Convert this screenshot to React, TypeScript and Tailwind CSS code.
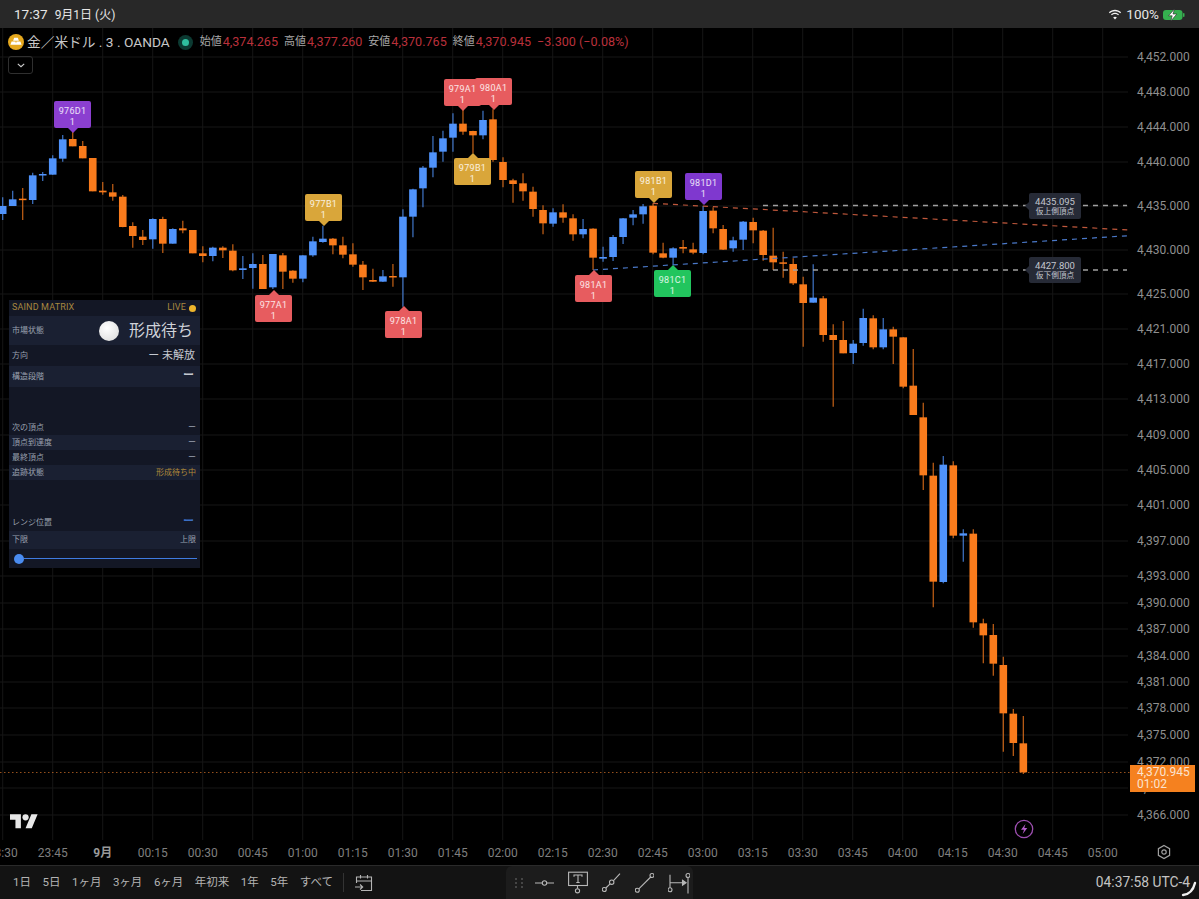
import { Fragment } from 'react';

const ORANGE = '#f97b1c';
const BLUE = '#5093fb';

// [dir, wickTop, bodyTop, bodyBottom, wickBottom] read off the picture at 3x, offset by the crop's top edge
type Raw = [number, number, number, number, number];
const LEFT: Raw[] = [
  [1, 382, 408, 432, 450], [1, 362, 388, 408, 408], [0, 354, 386, 390, 450], [1, 308, 316, 390, 402],
  [1, 306, 312, 316, 333], [1, 256, 265, 314, 314], [1, 195, 208, 266, 275], [0, 185, 207, 229, 229],
  [0, 213, 228, 265, 265], [0, 264, 264, 364, 364], [0, 336, 362, 367, 374], [0, 342, 367, 380, 392],
  [0, 375, 380, 471, 472], [0, 457, 468, 498, 533], [0, 480, 500, 510, 525], [1, 445, 447, 508, 536],
  [0, 440, 447, 521, 549], [1, 475, 477, 521, 521], [0, 452, 475, 481, 490], [0, 480, 480, 550, 550],
  [0, 529, 550, 558, 577], [1, 530, 533, 558, 574], [0, 529, 533, 541, 564], [0, 523, 542, 601, 604],
  [1, 558, 595, 600, 627], [1, 550, 582, 594, 656], [0, 555, 582, 657, 657], [1, 552, 552, 652, 657],
  [0, 549, 556, 605, 657], [0, 601, 602, 626, 638], [1, 556, 556, 626, 637], [1, 500, 514, 556, 560],
  [1, 467, 506, 516, 518], [0, 504, 506, 526, 553], [0, 500, 526, 554, 565], [0, 520, 553, 584, 590],
  [0, 573, 584, 622, 660], [0, 596, 630, 635, 636], [1, 600, 619, 635, 636], [0, 582, 618, 622, 650],
  [1, 418, 440, 622, 710], [1, 356, 358, 440, 502], [1, 288, 293, 355, 412], [1, 198, 247, 293, 322],
  [1, 182, 205, 245, 275], [1, 130, 161, 203, 245], [0, 120, 161, 185, 194], [0, 182, 183, 196, 250],
  [1, 122, 150, 196, 208], [0, 118, 148, 270, 275], [0, 262, 276, 330, 352], [0, 326, 331, 342, 398],
  [0, 310, 340, 364, 392], [0, 350, 365, 417, 440], [0, 406, 420, 460, 493], [1, 415, 427, 461, 470],
  [0, 403, 427, 443, 458], [0, 433, 445, 493, 512], [1, 447, 477, 493, 505], [0, 475, 476, 563, 600],
  [1, 530, 561, 566, 575], [1, 495, 501, 561, 573], [1, 444, 445, 501, 522], [1, 420, 433, 443, 466],
  [1, 402, 409, 433, 461], [0, 400, 407, 548, 553], [0, 518, 550, 563, 565], [1, 532, 535, 563, 585],
  [0, 510, 531, 536, 550], [0, 518, 538, 548, 553], [1, 408, 423, 549, 553], [0, 412, 422, 475, 490],
  [0, 465, 477, 539, 540], [1, 500, 511, 535, 545], [1, 453, 455, 509, 540], [0, 443, 456, 481, 520],
  [0, 480, 482, 555, 572], [0, 473, 557, 577, 600],
];
const MID: Raw[] = [
  [0, 215, 247, 251, 293], [0, 235, 252, 310, 315], [0, 290, 313, 369, 500], [1, 253, 353, 368, 368],
  [0, 348, 355, 465, 485], [0, 433, 465, 480, 680], [0, 423, 480, 520, 520], [1, 480, 491, 519, 552],
  [1, 386, 414, 489, 497], [0, 406, 415, 502, 508], [1, 414, 448, 502, 508], [0, 440, 448, 470, 552],
  [0, 472, 472, 620, 625], [0, 507, 617, 705, 705],
];
const RIGHT: Raw[] = [
  [0, -52, -8, 166, 210], [0, 128, 167, 485, 562], [1, 108, 134, 486, 490], [0, 124, 136, 347, 355],
  [1, 328, 340, 347, 425], [0, 328, 341, 607, 623], [0, 596, 610, 646, 730], [0, 612, 645, 731, 767],
  [0, 710, 735, 880, 995], [0, 867, 881, 969, 1008], [0, 888, 970, 1057, 1062],
];

const toPage = (rows: Raw[], base: number) =>
  rows.map(([d, a, b, c, e]) => [d, base + a / 3, base + b / 3, base + c / 3, base + e / 3]);

const CANDLES = [...toPage(LEFT, 70), ...toPage(MID, 180), ...toPage(RIGHT, 420)];

const PRICES: [string, number][] = [
  ['4,452.000', 57], ['4,448.000', 92], ['4,444.000', 127], ['4,440.000', 162], ['4,435.000', 206],
  ['4,430.000', 250], ['4,425.000', 294], ['4,421.000', 329], ['4,417.000', 364], ['4,413.000', 399],
  ['4,409.000', 435], ['4,405.000', 470], ['4,401.000', 505], ['4,397.000', 541], ['4,393.000', 576],
  ['4,390.000', 603], ['4,387.000', 629], ['4,384.000', 656], ['4,381.000', 682], ['4,378.000', 708],
  ['4,375.000', 735], ['4,372.000', 762], ['4,369.000', 788], ['4,366.000', 815],
];

const TIMES = [
  '23:30', '23:45', '9月', '00:15', '00:30', '00:45', '01:00', '01:15', '01:30', '01:45', '02:00', '02:15',
  '02:30', '02:45', '03:00', '03:15', '03:30', '03:45', '04:00', '04:15', '04:30', '04:45', '05:00',
];

const RANGES = ['1日', '5日', '1ヶ月', '3ヶ月', '6ヶ月', '年初来', '1年', '5年', 'すべて'];

const OHLC = [
  ['始値', '4,374.265'],
  ['高値', '4,377.260'],
  ['安値', '4,370.765'],
  ['終値', '4,370.945'],
];

const MARKERS = [
  { id: '976D1', pos: 'left-[54px] top-[73px]', bg: 'bg-[#8b3fd0]', tip: 'top-[27px] border-t-[5px] border-t-[#8b3fd0]' },
  { id: '977B1', pos: 'left-[305px] top-[166px]', bg: 'bg-[#d9a63a]', tip: 'top-[27px] border-t-[5px] border-t-[#d9a63a]' },
  { id: '977A1', pos: 'left-[255px] top-[267px]', bg: 'bg-[#e75c5f]', tip: '-top-[5px] border-b-[5px] border-b-[#e75c5f]' },
  { id: '978A1', pos: 'left-[385px] top-[283px]', bg: 'bg-[#e75c5f]', tip: '-top-[5px] border-b-[5px] border-b-[#e75c5f]' },
  { id: '979A1', pos: 'left-[444px] top-[51px]', bg: 'bg-[#e75c5f]', tip: 'top-[27px] border-t-[5px] border-t-[#e75c5f]' },
  { id: '980A1', pos: 'left-[475px] top-[50px]', bg: 'bg-[#e75c5f]', tip: 'top-[27px] border-t-[5px] border-t-[#e75c5f]' },
  { id: '979B1', pos: 'left-[454px] top-[130px]', bg: 'bg-[#d9a63a]', tip: '-top-[5px] border-b-[5px] border-b-[#d9a63a]' },
  { id: '981B1', pos: 'left-[635px] top-[143px]', bg: 'bg-[#d9a63a]', tip: 'top-[27px] border-t-[5px] border-t-[#d9a63a]' },
  { id: '981D1', pos: 'left-[685px] top-[145px]', bg: 'bg-[#7f38cf]', tip: 'top-[27px] border-t-[5px] border-t-[#7f38cf]' },
  { id: '981A1', pos: 'left-[575px] top-[247px]', bg: 'bg-[#e75c5f]', tip: '-top-[5px] border-b-[5px] border-b-[#e75c5f]' },
  { id: '981C1', pos: 'left-[654px] top-[242px]', bg: 'bg-[#22c55e]', tip: '-top-[5px] border-b-[5px] border-b-[#22c55e]' },
];

function Chart() {
  return (
    <svg className="absolute inset-0 w-[1199px] h-[812px]" viewBox="0 28 1199 812">
      {/* grid */}
      {PRICES.map(([, y]) => (
        <line key={y} x1="0" x2="1128" y1={y} y2={y} stroke="#161616" />
      ))}
      {TIMES.map((_, i) => (
        <line key={i} x1={2.7 + i * 50} x2={2.7 + i * 50} y1="28" y2="840" stroke="#161616" />
      ))}

      {/* candles */}
      {CANDLES.map(([d, wt, bt, bb, wb], i) => {
        const x = 2.7 + i * 10.006;
        const color = d ? BLUE : ORANGE;
        return (
          <Fragment key={i}>
            <line x1={x} x2={x} y1={wt} y2={wb} stroke={color} strokeOpacity="0.8" strokeWidth="1.2" />
            <rect x={x - 3.8} y={bt} width="7.6" height={Math.max(bb - bt, 1.5)} fill={color} />
          </Fragment>
        );
      })}

      {/* triangle + apex lines */}
      <line x1="653" y1="203.3" x2="1128.5" y2="230" stroke="#c0583c" strokeWidth="1.2" strokeDasharray="5 5" />
      <line x1="593" y1="270" x2="1128.5" y2="235.7" stroke="#4a78c8" strokeWidth="1.2" strokeDasharray="5 5" />
      <line x1="763" y1="205.5" x2="1127" y2="205.5" stroke="#a0a0a0" strokeWidth="1.3" strokeDasharray="5 5" />
      <line x1="763" y1="270" x2="1127" y2="270" stroke="#a0a0a0" strokeWidth="1.3" strokeDasharray="5 5" />
      <line x1="0" y1="772.5" x2="1130" y2="772.5" stroke="#d4722a" strokeOpacity="0.7" strokeWidth="1" strokeDasharray="1.5 2.5" />

      {/* price scale */}
      {PRICES.map(([label, y]) => (
        <text key={label} x="1137" y={y + 4.2} fill="#8f8f8f" fontSize="12">
          {label}
        </text>
      ))}
    </svg>
  );
}

function Marker({ id, pos, bg, tip }: (typeof MARKERS)[number]) {
  return (
    <div className={`absolute ${pos} w-[37px] h-[27px] rounded-[2px] ${bg} text-white/85 text-[9px] leading-[10.5px] tracking-[0.3px] text-center pt-[5px] whitespace-nowrap`}>
      <span className={`absolute left-[13.5px] w-0 h-0 border-x-[5px] border-x-transparent ${tip}`} />
      {id}
      <br />1
    </div>
  );
}

function ApexTag({ price, label, pos }: { price: string; label: string; pos: string }) {
  return (
    <div className={`absolute ${pos} w-[52px] h-[26px] rounded-[2px] bg-[#262a36] flex flex-col items-center justify-center text-[#c3c6ce]`}>
      <span className="absolute -left-[4px] top-[8.5px] w-0 h-0 border-y-[4.5px] border-y-transparent border-r-[4px] border-r-[#262a36]" />
      <span className="text-[9.5px] leading-[11px]">{price}</span>
      <span className="text-[7.7px] leading-[10px]">{label}</span>
    </div>
  );
}

function MatrixRow({ label, value, light, tone = 'text-[#9aa1af]' }: { label: string; value: string; light?: boolean; tone?: string }) {
  return (
    <div className={`h-[15px] pl-[3px] pr-[4px] flex items-center justify-between text-[8px] text-[#9aa1af] ${light ? 'bg-[#1a2032]' : ''}`}>
      <span>{label}</span>
      <span className={tone}>{value}</span>
    </div>
  );
}

function MatrixPanel() {
  return (
    <div className="absolute left-[9px] top-[272px] w-[191px] h-[268px] bg-[#131725] flex flex-col">
      <div className="h-[16px] pl-[3px] pr-[4px] flex items-center justify-between text-[9px] tracking-[0.15px] text-[#a8873f]">
        <span>SAIND MATRIX</span>
        <span className="flex items-center gap-[3px]">
          LIVE
          <span className="w-[7px] h-[7px] rounded-full bg-[#eeb52c]" />
        </span>
      </div>
      <div className="h-[29px] pl-[3px] pr-[7px] flex items-center justify-between bg-[#1a2032] text-[8px] text-[#9aa1af]">
        <span>市場状態</span>
        <span className="flex items-center gap-[10px] text-[16px] text-[#cfd2d8]">
          <span className="w-[20px] h-[20px] rounded-full bg-[radial-gradient(circle_at_40%_35%,#ffffff,#d8d8d8)]" />
          形成待ち
        </span>
      </div>
      <div className="h-[21px] pl-[3px] pr-[5px] pt-[1px] flex items-center justify-between text-[8px] text-[#9aa1af]">
        <span>方向</span>
        <span className="text-[11px] pt-[1px] text-[#c4c8d0]">ー 未解放</span>
      </div>
      <div className="h-[21px] pl-[3px] pr-[6px] flex items-center justify-between bg-[#1a2032] text-[8px] text-[#9aa1af]">
        <span>構造段階</span>
        <span className="text-[11px] font-bold text-[#c4c8d0]">ー</span>
      </div>
      <div className="h-[33px]" />
      <MatrixRow label="次の頂点" value="ー" />
      <MatrixRow label="頂点到達度" value="ー" light />
      <MatrixRow label="最終頂点" value="ー" />
      <MatrixRow label="追跡状態" value="形成待ち中" light tone="text-[#b08a3a]" />
      <div className="h-[34px]" />
      <div className="h-[17px] pl-[3px] pr-[6px] flex items-center justify-between text-[8px] text-[#9aa1af]">
        <span>レンジ位置</span>
        <span className="text-[11px] font-bold text-[#3b6fc4]">ー</span>
      </div>
      <div className="h-[18px] pl-[3px] pr-[4px] flex items-center justify-between bg-[#1a2032] text-[8px] text-[#9aa1af]">
        <span>下限</span>
        <span>上限</span>
      </div>
      <div className="flex-1 pl-[5px] pr-[3px] flex items-center">
        <span className="w-[10px] h-[10px] shrink-0 rounded-full bg-[#4a8cf0]" />
        <span className="flex-1 h-[1.5px] bg-[#3f7be0]" />
      </div>
    </div>
  );
}

function GoldIcon() {
  return (
    <svg viewBox="0 0 16 16" className="w-[16px] h-[16px] shrink-0">
      <circle cx="8" cy="8" r="8" fill="#e5a81e" />
      <path d="M6.200 3.800h3.600l1.100 3H5.100z M3.600 7.600h3.900l.8 3.200H2.400z M8.500 7.600h3.900l1.200 3.200H7.700z" fill="#fff" />
    </svg>
  );
}

function ToolIcons() {
  return (
    <div className="flex items-center gap-[14px] text-[#b8b8b8]">
      <svg viewBox="0 0 19 26" className="w-[19px] h-[26px]" fill="none" stroke="currentColor" strokeWidth="1.1">
        <path d="M0 13h7.300M11.700 13H19" />
        <circle cx="9.500" cy="13" r="2.200" />
      </svg>
      <svg viewBox="0 0 20 26" className="w-[20px] h-[26px]" fill="none" stroke="currentColor" strokeWidth="1.1">
        <rect x="0.600" y="2.200" width="18.800" height="13.300" />
        <path d="M6 6.700V5h8v1.700M10 5v7.500M8.300 12.500h3.400M9.500 15.500v3" />
        <circle cx="9.500" cy="20.800" r="2.100" />
      </svg>
      <svg viewBox="0 0 19 26" className="w-[19px] h-[26px]" fill="none" stroke="currentColor" strokeWidth="1.1">
        <circle cx="2.300" cy="19.500" r="2" />
        <path d="M3.800 18l4.300-4.200M11.500 10.600l6.500-7" />
        <circle cx="9.700" cy="12.200" r="2.200" />
      </svg>
      <svg viewBox="0 0 19 26" className="w-[19px] h-[26px]" fill="none" stroke="currentColor" strokeWidth="1.1">
        <circle cx="2.300" cy="20.200" r="2" />
        <path d="M3.800 18.800L15.700 7" />
        <circle cx="17" cy="5.500" r="2" />
      </svg>
      <svg viewBox="0 0 22 26" className="w-[22px] h-[26px]" fill="none" stroke="currentColor" strokeWidth="1.1">
        <path d="M2 4.800v12.900M2 12.800h13M20 7.600v16" />
        <path d="M14.500 10.300l3.600 2.500-3.600 2.500z" fill="currentColor" />
        <circle cx="2" cy="19.800" r="2" />
        <circle cx="20" cy="5.500" r="2" />
      </svg>
    </div>
  );
}

export default function App() {
  return (
    <div className="w-[1199px] h-[899px] flex flex-col bg-black overflow-hidden font-[Roboto,'Noto_Sans_CJK_JP',sans-serif]">
      {/* iPad status bar */}
      <div className="h-[28px] shrink-0 bg-[#282828] pl-[14px] pr-[14px] pt-[1px] flex items-center text-[#e6e6e6] text-[13.5px]">
        <span>17:37</span>
        <span className="ml-[7px] text-[12px]">9月1日 (火)</span>
        <div className="ml-auto flex items-center gap-[4px]">
          <svg viewBox="0 0 16 12" className="w-[14px] h-[11px]" fill="#f0f0f0">
            <path d="M8 2.200c2.300 0 4.400.9 6 2.400l1-1.100C13.100 1.600 10.700.6 8 .6S2.900 1.600 1 3.500l1 1.100c1.600-1.500 3.700-2.400 6-2.400z" />
            <path d="M8 5.500c1.400 0 2.600.5 3.600 1.400l1-1.100C11.300 4.600 9.700 3.900 8 3.900s-3.300.7-4.600 1.900l1 1.100c1-.9 2.200-1.400 3.600-1.400z" />
            <path d="M8 8.700c-.8 0-1.500.3-2.100.8L8 11.700l2.100-2.200c-.6-.5-1.300-.8-2.100-.8z" />
          </svg>
          <span>100%</span>
          <svg viewBox="0 0 22 12" className="w-[22px] h-[12px]">
            <rect x="0" y="1" width="19.500" height="10" rx="3" fill="#35b04f" />
            <rect x="20" y="4" width="1.500" height="4" rx="0.700" fill="#35b04f" />
            <path d="M11.500 0L5.500 6.800h3.700L7.800 12l6-7H10z" fill="#fff" stroke="#282828" strokeWidth="0.600" />
          </svg>
        </div>
      </div>

      {/* chart */}
      <div className="relative flex-1 min-h-0">
        <Chart />

        {/* legend */}
        <div className="absolute left-[8px] top-[4px] flex items-center whitespace-nowrap">
          <GoldIcon />
          <span className="ml-[3px] text-[13.7px] text-[#c8c8c8]">金／米ドル . 3 . OANDA</span>
          <span className="ml-[8px] w-[15px] h-[15px] rounded-full bg-[#0c3a32] flex items-center justify-center">
            <span className="w-[7px] h-[7px] rounded-full bg-[#2fbf9f]" />
          </span>
          <div className="ml-[7px] flex items-center gap-[6px] text-[12.6px] text-[#b9303b]">
            {OHLC.map(([label, value]) => (
              <span key={label} className="flex items-center gap-px">
                <span className="text-[11px] text-[#a8a8a8]">{label}</span>
                {value}
              </span>
            ))}
            <span>−3.300 (−0.08%)</span>
          </div>
        </div>
        <button className="absolute left-[8px] top-[28px] w-[25px] h-[18px] rounded-[3px] border border-[#2f2f2f] flex items-center justify-center text-[#cfcfcf]">
          <svg viewBox="0 0 10 6" className="w-[8px] h-[5px]" fill="none" stroke="currentColor" strokeWidth="1.4">
            <path d="M1 1l4 3.500L9 1" />
          </svg>
        </button>

        <MatrixPanel />

        {/* signal flags */}
        {MARKERS.map((m) => (
          <Marker key={m.id} {...m} />
        ))}

        <ApexTag price="4435.095" label="仮上側頂点" pos="left-[1029px] top-[165px]" />
        <ApexTag price="4427.800" label="仮下側頂点" pos="left-[1029px] top-[229px]" />

        {/* last price tag */}
        <div className="absolute left-[1130px] top-[737px] w-[65px] h-[27px] bg-[#f5811f] pl-[7px] pt-[1px] text-[12px] leading-[12px] text-[#fbe3cf]">
          4,370.945
          <br />
          01:02
        </div>

        {/* TradingView mark */}
        <svg viewBox="0 0 36 28" className="absolute left-[10px] top-[783px] w-[28px] h-[22px]" fill="#e8e8e8">
          <path d="M14 22H7V11H0V4h14v18zM28 22h-8l7.500-18h8L28 22z" />
          <circle cx="20" cy="8" r="4" />
        </svg>

        {/* lightning */}
        <svg viewBox="0 0 20 20" className="absolute left-[1014px] top-[791px] w-[20px] h-[20px]" fill="none">
          <circle cx="10" cy="10" r="8.700" stroke="#9d4fb0" strokeWidth="1.300" />
          <path d="M11.500 5L7 10.800h3l-1.300 4.200L13.300 9h-3z" fill="#b45cc9" />
        </svg>
      </div>

      {/* time scale */}
      <div className="h-[25px] shrink-0 relative flex items-center -ml-[22.300px] text-[12px] text-[#7f7f7f] whitespace-nowrap">
        {TIMES.map((t) => (
          <span key={t} className={`w-[50px] text-center ${t === '9月' ? 'font-bold text-[#9a9a9a]' : ''}`}>
            {t}
          </span>
        ))}
        <svg viewBox="0 0 16 16" className="absolute left-[1178.500px] top-[4px] w-[16px] h-[16px]" fill="none" stroke="#a0a0a0" strokeWidth="1.200">
          <path d="M8 1.500l5.600 3.200v6.600L8 14.500l-5.600-3.200V4.700z" />
          <circle cx="8" cy="8" r="2.200" />
        </svg>
      </div>

      {/* bottom bar */}
      <div className="h-[34px] shrink-0 relative border-t border-[#2a2a2a] bg-[#131313] grid grid-cols-[1fr_187px_1fr] items-center text-[#b4b4b4] text-[11.5px] whitespace-nowrap">
        <div className="pl-[13px] flex items-center">
          <div className="flex gap-[11.500px]">
            {RANGES.map((r) => (
              <span key={r}>{r}</span>
            ))}
          </div>
          <span className="ml-[10px] w-px h-[19px] bg-[#333]" />
          <svg viewBox="0 0 18 18" className="ml-[11px] w-[18px] h-[18px]" fill="none" stroke="currentColor" strokeWidth="1.100">
            <path d="M1.500 9V3h15v13.500H6M1.500 7h15M5.500 1v3.500M12.500 1v3.500M0 13h7.500M5 10.500L7.700 13 5 15.500" />
          </svg>
        </div>
        <div className="h-[33px] rounded-t-[6px] bg-[#1c1c1c] flex items-center pl-[8.500px]">
          <div className="grid grid-cols-2 gap-x-[4px] gap-y-[2px] mr-[12px]">
            {[0, 1, 2, 3, 4, 5].map((i) => (
              <span key={i} className="w-[2px] h-[2px] bg-[#454545]" />
            ))}
          </div>
          <ToolIcons />
        </div>
        <span className="justify-self-end mr-[9px] text-[13.8px] text-[#c4c4c4]">04:37:58 UTC-4</span>
        <svg viewBox="0 0 16 16" className="absolute right-[2px] bottom-[2px] w-[16px] h-[16px]" fill="none" stroke="#f0f0f0" strokeWidth="2.400" strokeLinecap="round">
          <path d="M2 14c5.500-.5 10-4 12-12" />
        </svg>
      </div>
    </div>
  );
}
